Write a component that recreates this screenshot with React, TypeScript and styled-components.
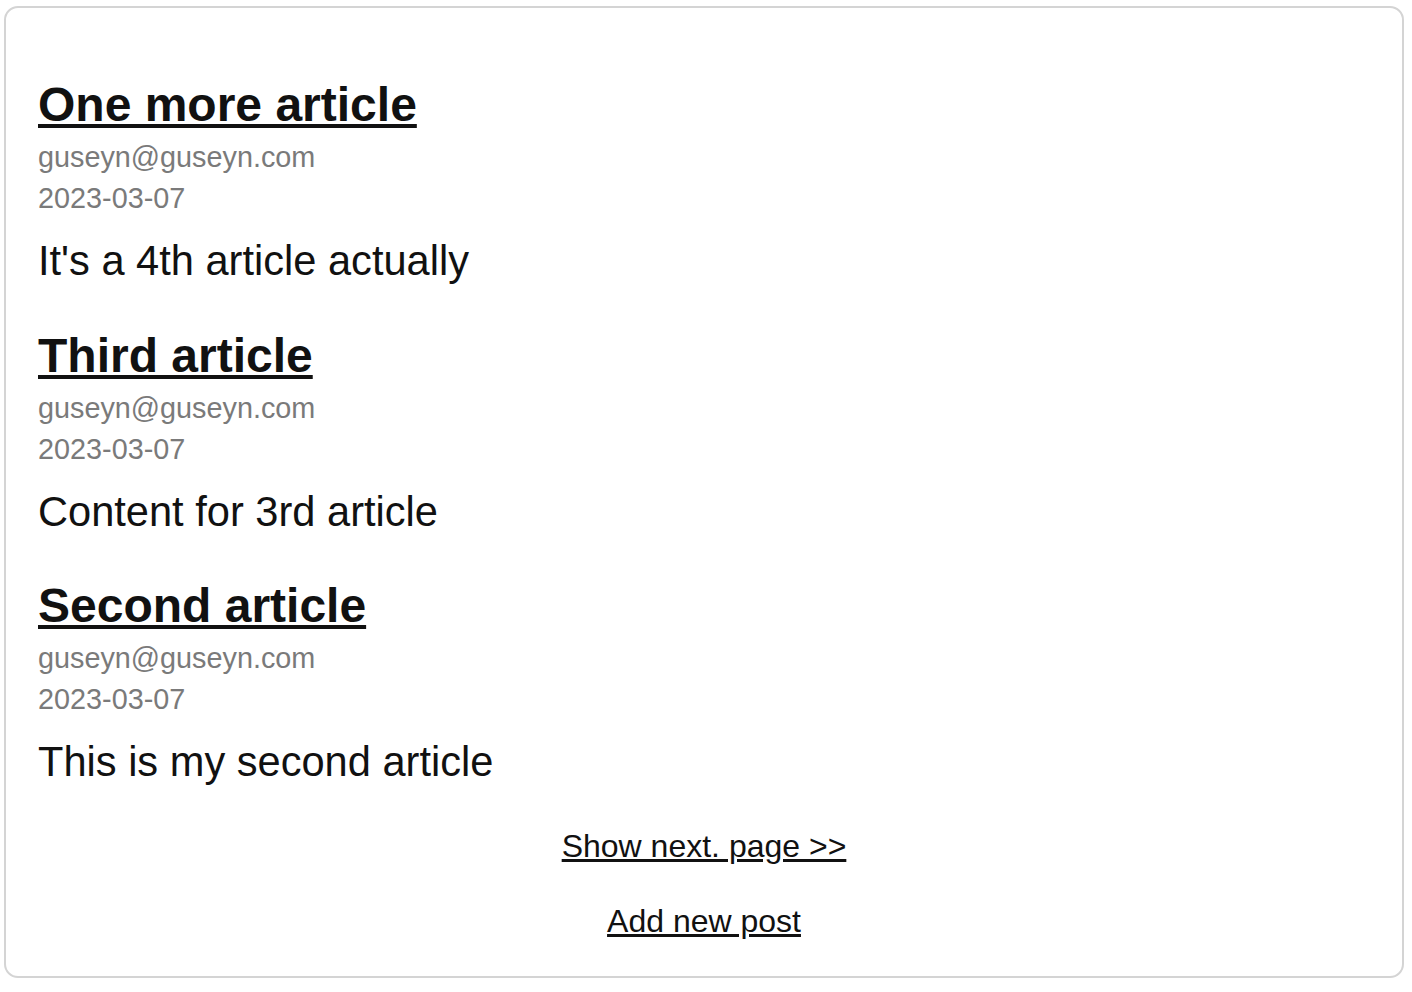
import styled, { createGlobalStyle } from "styled-components";

const GlobalStyle = createGlobalStyle`
  html, body {
    margin: 0;
    padding: 0;
    background: #ffffff;
  }
  body {
    font-family: "Liberation Sans", Arial, sans-serif;
    color: #111111;
  }
`;

const Page = styled.div`
  padding: 6px 8px 0 4px;
`;

const Card = styled.main`
  box-sizing: border-box;
  width: 1400px;
  height: 972px;
  border: 2px solid #d4d4d4;
  border-radius: 14px;
  padding: 69px 32px 35px 32px;
  display: flex;
  flex-direction: column;
`;

const PostList = styled.div`
  display: flex;
  flex-direction: column;
  gap: 41.5px;
`;

const Post = styled.article`
  display: flex;
  flex-direction: column;
`;

const Title = styled.a`
  align-self: flex-start;
  font-size: 48px;
  font-weight: 700;
  line-height: 56px;
  color: #111111;
  text-decoration: underline;
  margin-bottom: 4px;
`;

const Meta = styled.div`
  font-size: 28.8px;
  line-height: 41px;
  color: #7a7a7a;
`;

const Body = styled.p`
  margin: 17px 0 0 0;
  font-size: 41.6px;
  line-height: 50px;
  color: #111111;
`;

const Footer = styled.nav`
  margin-top: 39px;
  display: flex;
  flex-direction: column;
  align-items: center;
  gap: 35px;
`;

const FooterLink = styled.a`
  font-size: 32px;
  line-height: 40px;
  color: #111111;
  text-decoration: underline;
`;

type PostData = {
  title: string;
  author: string;
  date: string;
  content: string;
};

const posts: PostData[] = [
  {
    title: "One more article",
    author: "guseyn@guseyn.com",
    date: "2023-03-07",
    content: "It's a 4th article actually",
  },
  {
    title: "Third article",
    author: "guseyn@guseyn.com",
    date: "2023-03-07",
    content: "Content for 3rd article",
  },
  {
    title: "Second article",
    author: "guseyn@guseyn.com",
    date: "2023-03-07",
    content: "This is my second article",
  },
];

const App = () => {
  return (
    <Page>
      <GlobalStyle />
      <Card>
        <PostList>
          {posts.map((post) => (
            <Post key={post.title}>
              <Title href="#">{post.title}</Title>
              <Meta>{post.author}</Meta>
              <Meta>{post.date}</Meta>
              <Body>{post.content}</Body>
            </Post>
          ))}
        </PostList>
        <Footer>
          <FooterLink href="#">Show next. page &gt;&gt;</FooterLink>
          <FooterLink href="#">Add new post</FooterLink>
        </Footer>
      </Card>
    </Page>
  );
};

export default App;
